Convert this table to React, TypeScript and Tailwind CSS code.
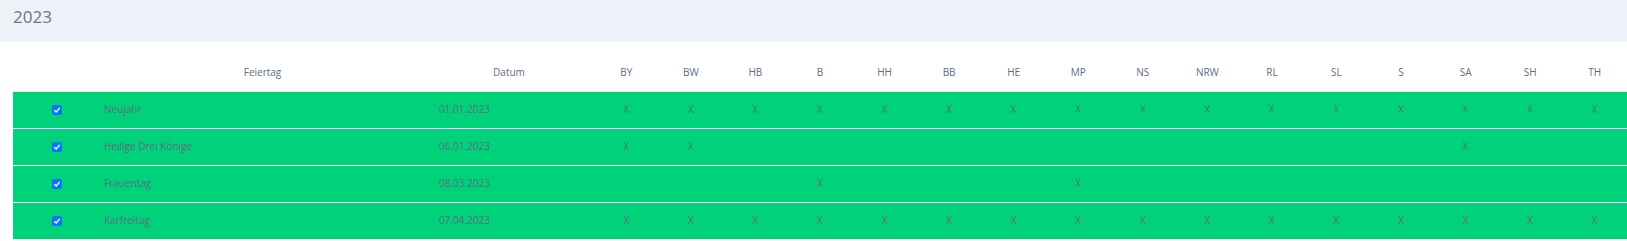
const states = ['BY', 'BW', 'HB', 'B', 'HH', 'BB', 'HE', 'MP', 'NS', 'NRW', 'RL', 'SL', 'S', 'SA', 'SH', 'TH']

const all = states
const holidays = [
  { name: 'Neujahr', date: '01.01.2023', in: all },
  { name: 'Heilige Drei Könige', date: '06.01.2023', in: ['BY', 'BW', 'SA'] },
  { name: 'Frauentag', date: '08.03.2023', in: ['B', 'MP'] },
  { name: 'Karfreitag', date: '07.04.2023', in: all },
]

function Check() {
  return (
    <span className="inline-flex w-[10px] h-[10px] rounded-[2px] bg-[#0a74ff] items-center justify-center align-middle">
      <svg viewBox="0 0 10 10" className="w-[8px] h-[8px]" fill="none">
        <path d="M1.6 5.2 L4 7.4 L8.4 2.4" stroke="white" strokeWidth="1.7" />
      </svg>
    </span>
  )
}

export default function App() {
  return (
    <div className="w-[1627px] h-[241px] overflow-hidden bg-white text-[#5e6e82]" style={{ fontFamily: '"Open Sans", sans-serif' }}>
      <div className="h-[42px] bg-[#edf2f9] px-[13px] pt-[8px]">
        <h5 className="text-[17px] text-[#67758a] leading-[17px]">2023</h5>
      </div>

      <div className="pl-[13px] pt-[13px]">
        <table className="w-full table-fixed border-collapse text-[10px]">
          <colgroup>
            <col className="w-[88px]" />
            <col className="w-[323px]" />
            <col className="w-[170px]" />
            {states.map((s) => <col key={s} />)}
          </colgroup>
          <thead>
            <tr className="h-[36px] border-b border-[#e3e8ef]">
              <th className="font-normal"></th>
              <th className="font-normal text-center">Feiertag</th>
              <th className="font-normal text-center">Datum</th>
              {states.map((s) => (
                <th key={s} className="font-normal text-center">{s}</th>
              ))}
            </tr>
          </thead>
          <tbody>
            {holidays.map((h) => (
              <tr key={h.name} className="h-[37px] bg-[#00d27a] border-b border-white">
                <td className="text-center"><Check /></td>
                <td className="pl-[3px]">{h.name}</td>
                <td className="pl-[15px]">{h.date}</td>
                {states.map((s) => (
                  <td key={s} className="text-center">{h.in.includes(s) ? 'X' : ''}</td>
                ))}
              </tr>
            ))}
          </tbody>
        </table>
      </div>
    </div>
  )
}
